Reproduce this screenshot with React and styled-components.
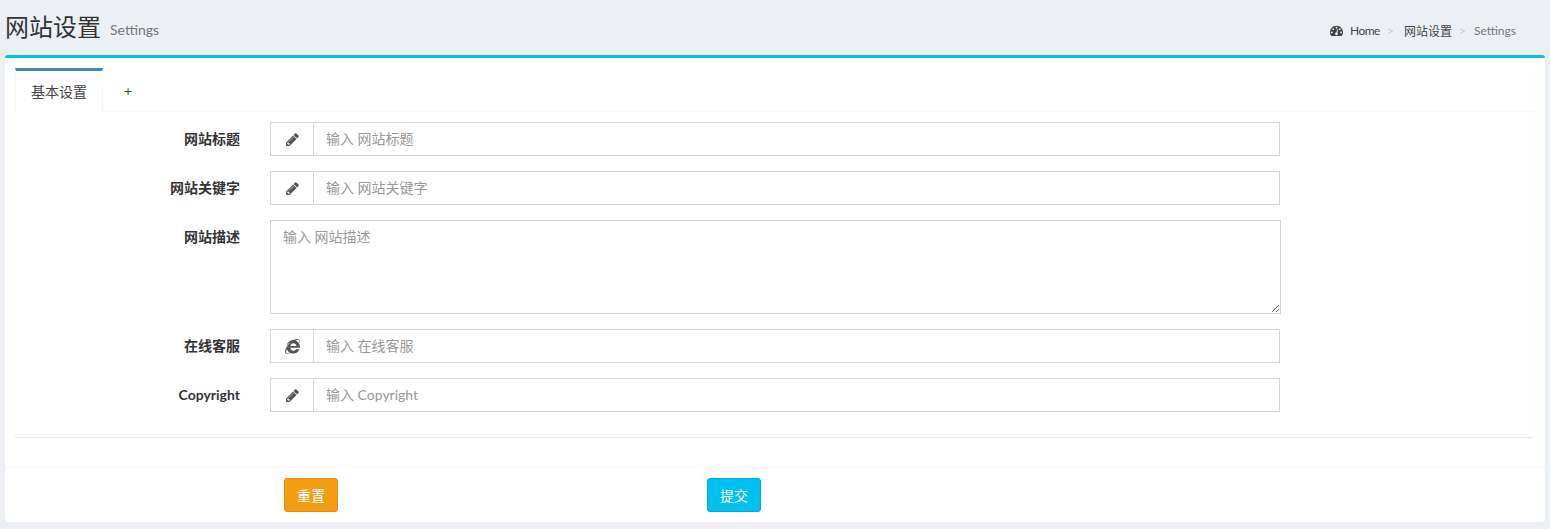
import React from 'react';
import styled, { createGlobalStyle } from 'styled-components';
import { FaInternetExplorer } from 'react-icons/fa';

const fields = [
    { label: '网站标题', placeholder: '输入 网站标题', icon: 'pencil' },
    { label: '网站关键字', placeholder: '输入 网站关键字', icon: 'pencil' },
    { label: '网站描述', placeholder: '输入 网站描述', multiline: true },
    { label: '在线客服', placeholder: '输入 在线客服', icon: 'ie' },
    { label: 'Copyright', placeholder: '输入 Copyright', icon: 'pencil' },
];

function PencilIcon() {
    return (
        <svg width="15" height="15" viewBox="0 0 1792 1792" fill="currentColor">
            <path d="M491 1536l91-91-235-235-91 91v107h128v128h107zm523-928q0-22-22-22-10 0-17 7l-542 542q-7 7-7 17 0 22 22 22 10 0 17-7l542-542q7-7 7-17zm-54-192l416 416-832 832h-416v-416zm683 96q0 53-37 90l-166 166-416-416 166-165q36-38 90-38 53 0 91 38l235 234q37 39 37 91z" />
        </svg>
    );
}

function DashboardIcon() {
    return (
        <svg width="13" height="13" viewBox="0 0 1792 1792" fill="currentColor">
            <path d="M384 1152q0-53-37.5-90.5t-90.5-37.5-90.5 37.5-37.5 90.5 37.5 90.5 90.5 37.5 90.5-37.5 37.5-90.5zm192-448q0-53-37.5-90.5t-90.5-37.5-90.5 37.5-37.5 90.5 37.5 90.5 90.5 37.5 90.5-37.5 37.5-90.5zm428 481l101-382q6-26-7.5-48.5t-38.5-29.5-48 6.5-30 39.5l-101 382q-60 5-107 43.5t-63 98.5q-20 77 20 146t117 89 146-20 89-117q16-60-6-117t-72-91zm660-33q0-53-37.5-90.5t-90.5-37.5-90.5 37.5-37.5 90.5 37.5 90.5 90.5 37.5 90.5-37.5 37.5-90.5zm-640-640q0-53-37.5-90.5t-90.5-37.5-90.5 37.5-37.5 90.5 37.5 90.5 90.5 37.5 90.5-37.5 37.5-90.5zm448 192q0-53-37.5-90.5t-90.5-37.5-90.5 37.5-37.5 90.5 37.5 90.5 90.5 37.5 90.5-37.5 37.5-90.5zm320 448q0 261-141 483-19 29-54 29h-1402q-35 0-54-29-141-221-141-483 0-182 71-348t191-286 286-191 348-71 348 71 286 191 191 286 71 348z" />
        </svg>
    );
}

export default function App() {
    return (
        <>
            <GlobalStyle />
            <Header>
                <Title>网站设置<Sub>Settings</Sub></Title>
                <Breadcrumb>
                    <DashboardIcon />
                    <Crumb $tight>Home</Crumb>
                    <Sep $wide>&gt;</Sep>
                    <Crumb>网站设置</Crumb>
                    <Sep>&gt;</Sep>
                    <Crumb $muted>Settings</Crumb>
                </Breadcrumb>
            </Header>
            <Box>
                <Body>
                    <Panel>
                        <Tabs>
                            <Tab $active>基本设置</Tab>
                            <Tab>+</Tab>
                        </Tabs>
                        <Form onSubmit={e => e.preventDefault()}>
                            {fields.map(field => (
                                <Row key={field.label}>
                                    <Label>{field.label}</Label>
                                    {field.multiline ? (
                                        <Textarea placeholder={field.placeholder} />
                                    ) : (
                                        <InputGroup>
                                            <Addon>
                                                {field.icon === 'ie' ? <FaInternetExplorer size={15} /> : <PencilIcon />}
                                            </Addon>
                                            <Input placeholder={field.placeholder} />
                                        </InputGroup>
                                    )}
                                </Row>
                            ))}
                        </Form>
                    </Panel>
                </Body>
                <Footer>
                    <Button type="button" $color="#f39c12" $border="#e08e0b">重置</Button>
                    <Button type="button" $color="#00c0ef" $border="#00acd6">提交</Button>
                </Footer>
            </Box>
        </>
    );
}

const GlobalStyle = createGlobalStyle`
    * {
        box-sizing: border-box;
    }
    body {
        margin: 0;
        background: #ecf0f5;
        color: #333;
        font-family: Lato, "Noto Sans CJK SC", sans-serif;
        font-size: 14px;
    }
`;

const Header = styled.div`
    height: 55px;
    padding: 9px 34px 0 5px;
    display: flex;
    justify-content: space-between;
    align-items: flex-start;
`;

const Title = styled.h1`
    margin: 0;
    font-size: 24px;
    font-weight: 400;
    line-height: 36px;
`;

const Sub = styled.small`
    margin-left: 9px;
    font-size: 14px;
    color: #777;
    vertical-align: 1px;
`;

const Breadcrumb = styled.div`
    display: flex;
    align-items: center;
    height: 20px;
    margin-top: 11px;
    font-size: 12px;
    color: #444;
    gap: 7px;
`;

const Crumb = styled.span`
    color: ${p => (p.$muted ? '#777' : '#444')};
    letter-spacing: ${p => (p.$tight ? '-0.5px' : '0')};
`;

const Sep = styled.span`
    color: #ccc;
    margin-right: ${p => (p.$wide ? '3px' : '1px')};
`;

const Box = styled.div`
    height: 467px;
    margin: 0 5px;
    background: #fff;
    border-top: 3px solid #00c0ef;
    border-radius: 3px;
    box-shadow: 0 1px 1px rgba(0, 0, 0, 0.1);
    display: flex;
    flex-direction: column;
`;

const Body = styled.div`
    height: 410px;
    padding: 10px 10px 0;
    border-bottom: 1px solid #f4f4f4;
`;

const Panel = styled.div`
    height: 369px;
    background: #fff;
    border-radius: 3px;
    box-shadow: 0 1px 1px rgba(0, 0, 0, 0.1);
`;

const Tabs = styled.div`
    display: flex;
    height: 44px;
    border-bottom: 1px solid #f4f4f4;
`;

const Tab = styled.div`
    height: ${p => (p.$active ? '44px' : '40px')};
    margin-top: ${p => (p.$active ? '0' : '3px')};
    padding: 0 15px 2px;
    padding-left: ${p => (p.$active ? '15px' : '21px')};
    display: flex;
    align-items: center;
    background: #fff;
    border-top: ${p => (p.$active ? '3px solid #3c8dbc' : 'none')};
    border-right: ${p => (p.$active ? '1px solid #f4f4f4' : 'none')};
    border-left: ${p => (p.$active ? '1px solid #f4f4f4' : 'none')};
    color: #444;
`;

const Form = styled.form`
    padding-top: 10px;
    display: flex;
    flex-direction: column;
    gap: 15px;
`;

const Row = styled.div`
    display: flex;
`;

const Label = styled.label`
    width: 225px;
    margin-right: 30px;
    padding-top: 7px;
    text-align: right;
    font-weight: 700;
    line-height: 20px;
    color: #333;
`;

const InputGroup = styled.div`
    display: flex;
    width: 1010px;
    height: 34px;
    border: 1px solid #d2d6de;
`;

const Addon = styled.span`
    width: 43px;
    display: flex;
    align-items: center;
    justify-content: center;
    border-right: 1px solid #d2d6de;
    color: #555;
    flex-shrink: 0;
`;

const Input = styled.input`
    flex: 1;
    min-width: 0;
    border: none;
    outline: none;
    padding: 0 12px 2px;
    font: inherit;
    color: #555;
    &::placeholder {
        color: #999;
        opacity: 1;
    }
`;

const Textarea = styled.textarea`
    display: block;
    width: 1011px;
    height: 94px;
    padding: 6px 12px;
    border: 1px solid #d2d6de;
    border-radius: 0;
    outline: none;
    font: inherit;
    line-height: 20px;
    resize: vertical;
    &::placeholder {
        color: #999;
        opacity: 1;
    }
`;

const Footer = styled.div`
    flex: 1;
    padding: 10px 0 0 279px;
    display: flex;
    gap: 369px;
`;

const Button = styled.button`
    width: 54px;
    height: 34px;
    padding: 0 0 1px;
    background: ${p => p.$color};
    border: 1px solid ${p => p.$border};
    border-radius: 3px;
    color: #fff;
    font: inherit;
`;
